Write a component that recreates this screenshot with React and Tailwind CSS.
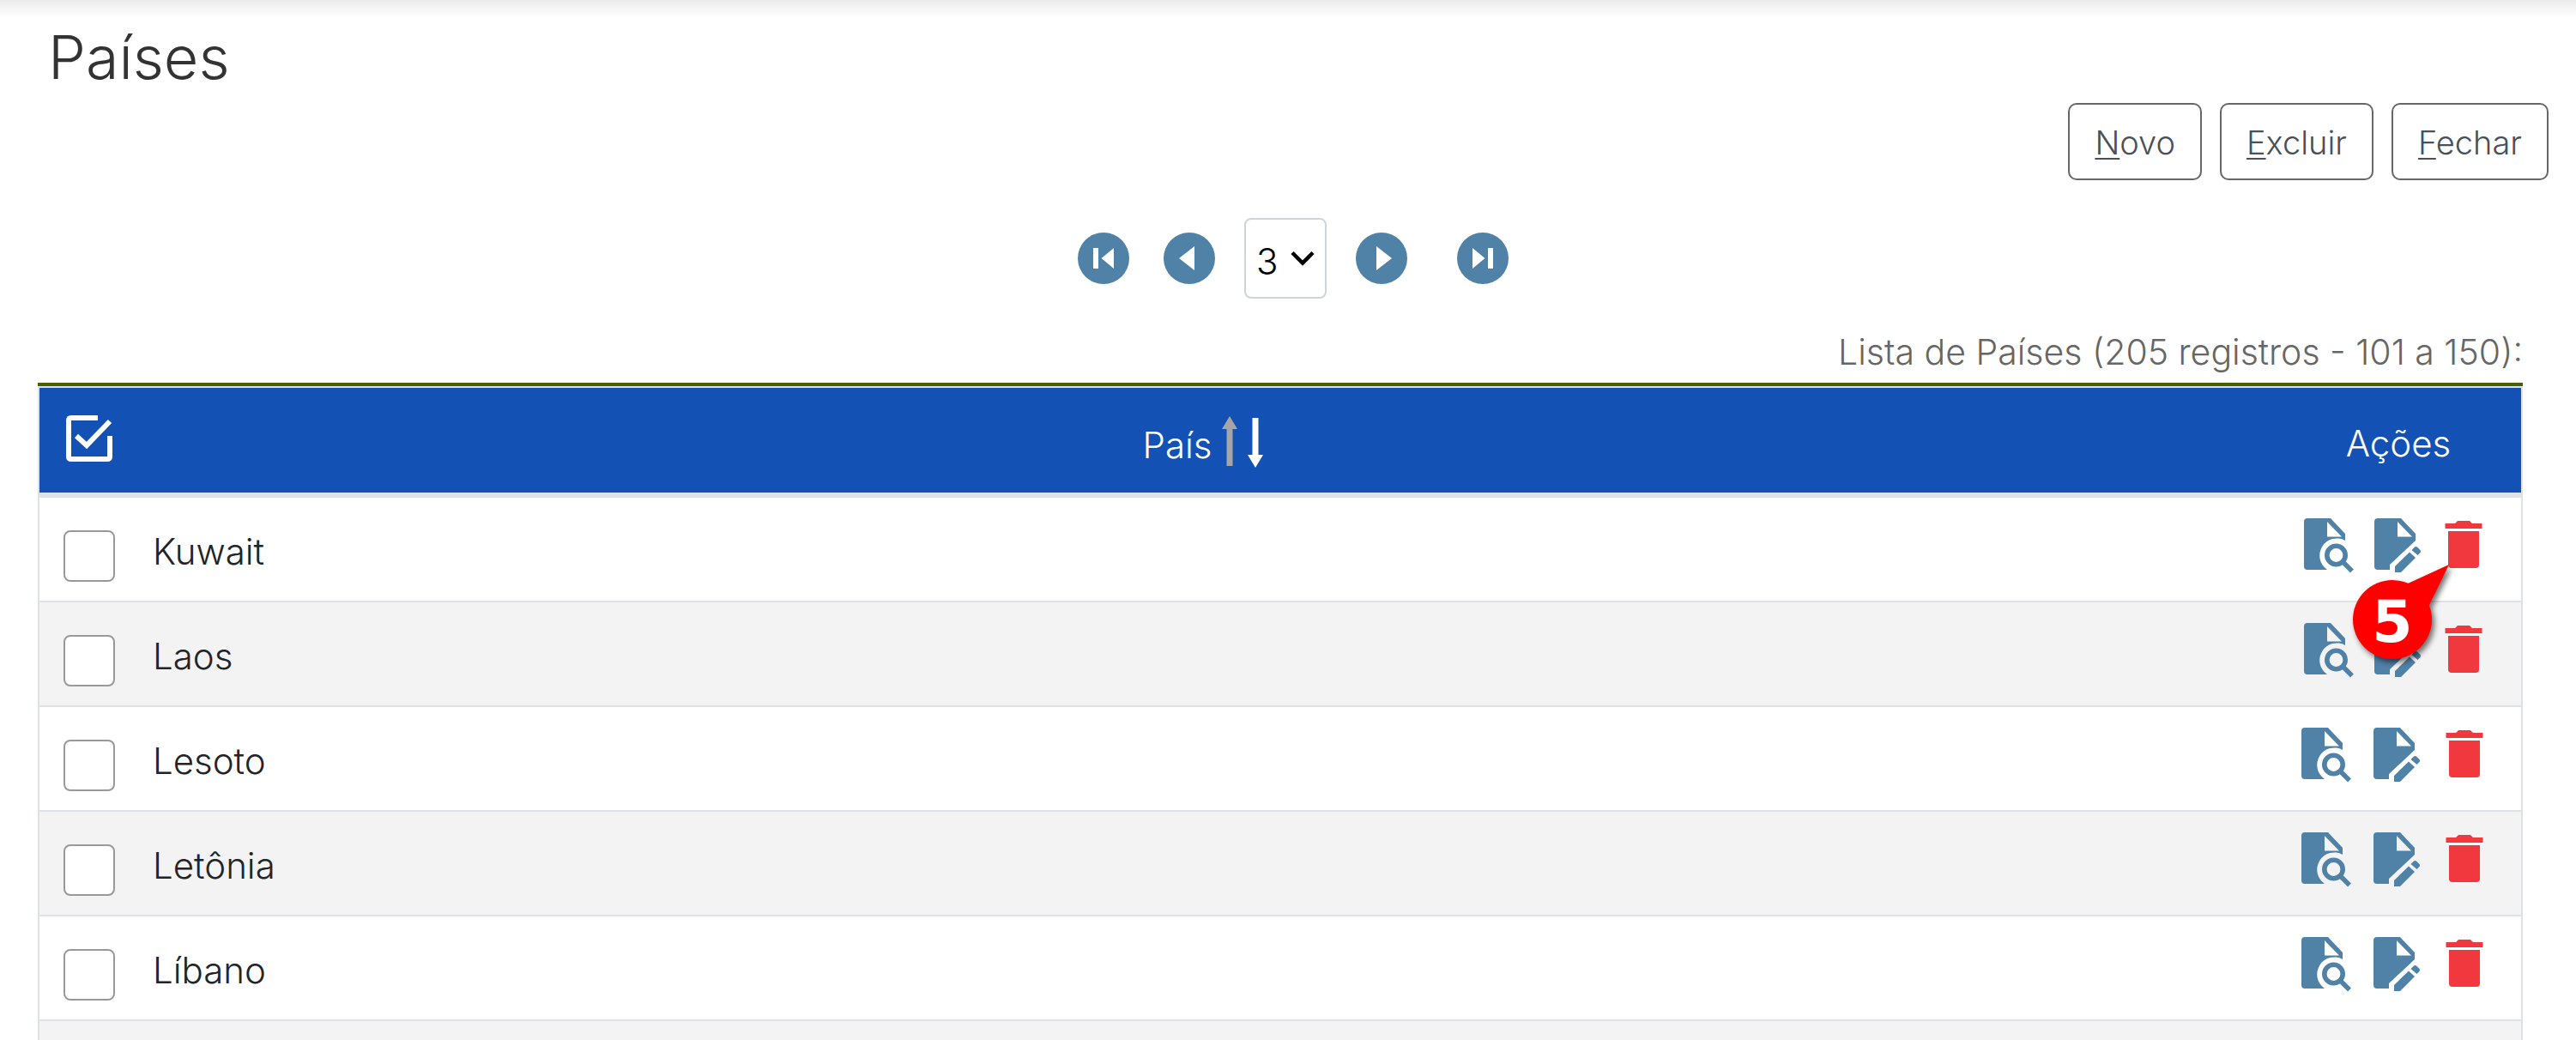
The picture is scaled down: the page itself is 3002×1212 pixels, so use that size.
import React from "react";

const countries = ["Kuwait", "Laos", "Lesoto", "Letônia", "Líbano"];

const actions = [
  { key: "N", rest: "ovo" },
  { key: "E", rest: "xcluir" },
  { key: "F", rest: "echar" },
];

function PagerButton({ label, children }) {
  return (
    <button type="button" aria-label={label} className="size-[60px] rounded-full">
      <svg viewBox="0 0 60 60" className="size-full">
        <circle cx="30" cy="30" r="30" fill="#5081a6" />
        <g fill="#fff">{children}</g>
      </svg>
    </button>
  );
}

function ViewIcon() {
  return (
    <svg viewBox="0 0 58 64" className="h-16 w-[58px]" fill="#5081a6">
      <path
        fillRule="evenodd"
        d="M4 0H31L48 18V26A20 20 0 0 0 27 60H4Q0 60 0 56V4Q0 0 4 0ZM27 4V21.5H44Z"
      />
      <circle cx="37.5" cy="43" r="10.7" fill="none" stroke="#5081a6" strokeWidth="5.6" />
      <path d="M46 51.5L56 61.5" stroke="#5081a6" strokeWidth="5.4" />
    </svg>
  );
}

function EditIcon() {
  return (
    <svg viewBox="0 0 54 64" className="h-16 w-[54px]" fill="#5081a6">
      <path
        fillRule="evenodd"
        d="M4 0H31L48 18V26L18 54V60H4Q0 60 0 56V4Q0 0 4 0ZM27 4V21.5H44Z"
      />
      <path d="M24 56L41 39.5L48 46L31 63H24Z" />
      <path d="M43.5 37L47 33.5Q48.5 32.5 50 33.5L53.5 37Q54.5 38.5 53.5 40L50.5 43Z" />
    </svg>
  );
}

function TrashIcon() {
  return (
    <svg viewBox="0 0 44 57" className="h-[57px] w-11" fill="#f0383e">
      <path d="M0.5 4H12L15 1H29L32 4H43.5V10H0.5Z" />
      <path d="M4 13H40V52Q40 56 36 56H8Q4 56 4 52Z" />
    </svg>
  );
}

function StepMarker() {
  return (
    <svg
      viewBox="0 0 124 124"
      className="pointer-events-none absolute top-[76px] left-[88px] z-10 size-[124px] drop-shadow-[3px_4px_3px_rgba(0,0,0,0.55)]"
    >
      <circle cx="48" cy="66" r="46" fill="#f00" />
      <path d="M66 24L114 2L91 49L60 66Z" fill="#f00" />
      <text
        x="48"
        y="92"
        textAnchor="middle"
        fill="#fff"
        className="font-['DejaVu_Sans',sans-serif] text-[68px] font-bold"
      >
        5
      </text>
    </svg>
  );
}

function CountryRow({ name, marked, nudged }) {
  return (
    <tr className="h-[122px] odd:bg-white even:bg-[#f3f3f3]">
      <td className="border-b-2 border-[#dee2e6] pt-4 pl-7 align-middle">
        <input
          type="checkbox"
          aria-label={name}
          className="block size-[60px] appearance-none rounded-lg border-2 border-[#999] bg-white"
        />
      </td>
      <td className="border-b-2 border-[#dee2e6] pt-1.5 pl-[22px] text-left text-[#212529]">{name}</td>
      <td className="border-b-2 border-[#dee2e6] align-top">
        <div className={nudged ? "relative flex gap-6 pt-6 pl-[33px]" : "relative flex gap-[26px] pt-6 pl-[30px]"}>
          <button type="button" aria-label={"Consultar " + name} className="block">
            <ViewIcon />
          </button>
          <button type="button" aria-label={"Alterar " + name} className="block">
            <EditIcon />
          </button>
          <button type="button" aria-label={"Excluir " + name} className="ml-1 block pb-1">
            <TrashIcon />
          </button>
          {marked && <StepMarker />}
        </div>
      </td>
    </tr>
  );
}

export default function App() {
  return (
    <div className="h-screen overflow-hidden bg-white font-['Inter',sans-serif] text-[42px] leading-[60px] font-light">
      <div className="h-5 bg-linear-to-b from-[#ebebeb] to-white" />
      <h1 className="mb-1.5 pl-14 text-[70px] leading-[94px] text-[#333]">Países</h1>

      <div className="flex justify-end gap-[21px] pr-8">
        {actions.map((a) => (
          <button
            key={a.key}
            type="button"
            className="h-[90px] rounded-[10px] border-2 border-[#666] px-[29px] pt-0.5 text-[38px] text-[#495057]"
          >
            <u className="decoration-2 underline-offset-4">{a.key}</u>
            {a.rest}
          </button>
        ))}
      </div>

      <nav aria-label="Paginação" className="mt-11 flex items-center justify-center pl-3">
        <PagerButton label="Primeira página">
          <path d="M18 18H24V42H18ZM42 18V42L27.5 30Z" />
        </PagerButton>
        <div className="ml-10 flex">
          <PagerButton label="Página anterior">
            <path d="M36 16V44L18 30Z" />
          </PagerButton>
        </div>
        <div className="relative mr-[34px] ml-[34px]">
          <select
            aria-label="Página"
            defaultValue="3"
            className="block h-[94px] w-24 appearance-none rounded-lg border-2 border-[#ced4da] bg-white pt-2 pl-3 text-black"
          >
            <option>1</option>
            <option>2</option>
            <option>3</option>
            <option>4</option>
            <option>5</option>
          </select>
          <svg viewBox="0 0 28 18" className="pointer-events-none absolute top-[38px] right-3.5 h-[18px] w-7">
            <path d="M2 2.5L14 14.5L26 2.5" fill="none" stroke="#000" strokeWidth="4.5" />
          </svg>
        </div>
        <PagerButton label="Próxima página">
          <path d="M24 16V44L42 30Z" />
        </PagerButton>
        <div className="ml-[58px] flex">
          <PagerButton label="Última página">
            <path d="M36 18H42V42H36ZM18 18V42L32.5 30Z" />
          </PagerButton>
        </div>
      </nav>

      <div className="mt-7 mr-[62px] ml-11">
        <table className="w-full table-fixed border-separate border-spacing-0 border-x-2 border-[#dee2e6]">
          <caption className="h-[74px] border-b-4 border-[#466100] pt-1 text-right text-[41px] text-[#666]">
            Lista de Países (205 registros - 101 a 150):
          </caption>
          <colgroup>
            <col className="w-[110px]" />
            <col />
            <col className="w-[286px]" />
          </colgroup>
          <thead>
            <tr className="h-[130px] bg-[#1351b4] text-white">
              <th className="border-t-2 border-b-6 border-[#dee2e6] pl-[30px] font-light">
                <button type="button" aria-label="Selecionar tudo" className="block pb-1">
                  <svg viewBox="0 0 56 56" className="size-14" fill="none" stroke="#fff" strokeWidth="6">
                    <path d="M38 4H7Q4 4 4 7V49Q4 52 7 52H49Q52 52 52 49V25" />
                    <path d="M13 25L25 36L52 8" />
                  </svg>
                </button>
              </th>
              <th className="border-t-2 border-b-6 border-[#dee2e6] font-light">
                <div className="flex items-center justify-center gap-3 pt-1 pr-1">
                  <span className="pt-2">País</span>
                  <span className="flex gap-3">
                    <button type="button" aria-label="Ordenar crescente" className="block">
                      <svg viewBox="0 0 18 60" className="h-[60px] w-[18px]" fill="#a6a6a6">
                        <path d="M9 0L18 15H12.5V58H5.5V15H0Z" />
                      </svg>
                    </button>
                    <button type="button" aria-label="Ordenar decrescente" className="block">
                      <svg viewBox="0 0 18 60" className="h-[60px] w-[18px]" fill="#fff">
                        <path d="M9 60L18 45H12.5V2H5.5V45H0Z" />
                      </svg>
                    </button>
                  </span>
                </div>
              </th>
              <th className="border-t-2 border-b-6 border-[#dee2e6] pt-2 font-light">Ações</th>
            </tr>
          </thead>
          <tbody>
            {countries.map((name, i) => (
              <CountryRow key={name} name={name} marked={i === 0} nudged={i < 2} />
            ))}
            <tr className="h-[122px] bg-[#f3f3f3]">
              <td colSpan={3} />
            </tr>
          </tbody>
        </table>
      </div>
    </div>
  );
}
